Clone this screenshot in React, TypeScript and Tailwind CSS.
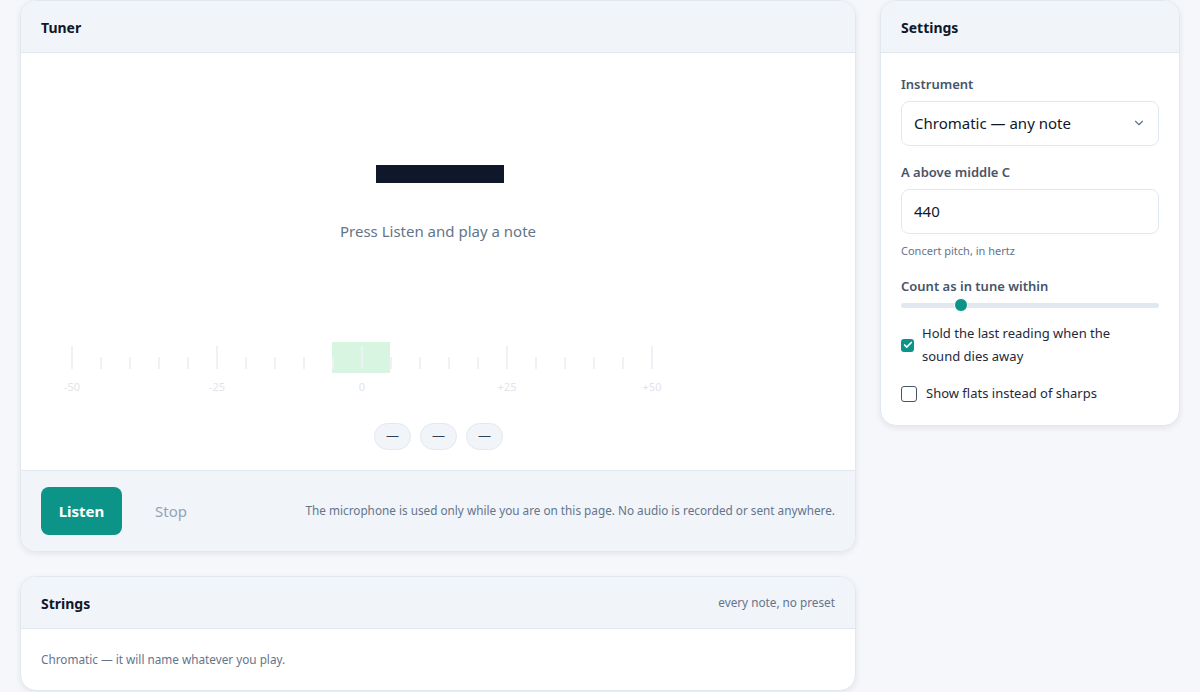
import { Check, ChevronDown } from 'lucide-react'

const ticks = Array.from({ length: 21 }, (_, i) => i)

function Card({ title, aside, children }: { title: string, aside?: string, children: React.ReactNode }) {
	return (
		<div className="rounded-2xl border border-[#e2e8f0] bg-white shadow-[0_2px_6px_rgba(15,23,42,0.08)] overflow-hidden">
			<div className="flex items-center justify-between h-[52px] px-5 bg-[#f1f4f9] border-b border-[#e2e8f0]">
				<h2 className="text-[14px] font-bold text-[#0f172a] pt-[1px]">{title}</h2>
				{aside && <span className="text-[11.75px] text-[#64748b]">{aside}</span>}
			</div>
			{children}
		</div>
	)
}

function Scale() {
	return (
		<div className="w-full">
			<div className="relative h-[32px]">
				<div className="absolute left-[311px] top-0 w-[58px] h-[31px] bg-[#d7f5e1]" />
				{ticks.map(i => (
					<div
						key={i}
						className={i % 5 === 0
							? 'absolute top-[4px] w-[2px] h-[23px] bg-[#eef1f5]'
							: 'absolute top-[15px] w-[2px] h-[12px] bg-[#eef1f5]'}
						style={{ left: 50 + i * 29 }}
					/>
				))}
			</div>
			<div className="relative h-[20px] text-[11px] text-[#dfe4ea]">
				{['-50', '-25', '0', '+25', '+50'].map((l, i) => (
					<span key={l} className="absolute top-[5px] -translate-x-1/2" style={{ left: 51 + i * 145 }}>{l}</span>
				))}
			</div>
		</div>
	)
}

export default function App() {
	return (
		<div className="min-h-[692px] bg-[#f6f7fb] px-5 pt-0 font-['Noto_Sans','Open_Sans',sans-serif]">
			<div className="flex gap-6 items-start">
				<div className="flex flex-col gap-6 w-[836px]">
					<Card title="Tuner">
						<div className="h-[417px] flex flex-col items-center pt-[112px]">
							<div className="ml-[4px] w-[128px] h-[18px] bg-[#0f172a]" />
							<p className="mt-[37px] text-[15px] text-[#64748b]">Press Listen and play a note</p>
							<div className="mt-[99px] w-full">
								<Scale />
							</div>
							<div className="mt-[29px] flex gap-[9px] pl-[1px]">
								{[0, 1, 2].map(i => (
									<span key={i} className="w-[37px] h-[27px] rounded-full bg-[#f1f5f9] border border-[#e2e8f0] flex items-center justify-center text-[13px] text-[#334155]">—</span>
								))}
							</div>
						</div>
						<div className="h-[81px] bg-[#f1f4f9] border-t border-[#e2e8f0] flex items-center px-5">
							<button className="w-[81px] h-[48px] rounded-lg bg-[#0d9488] text-white text-[15px] font-bold">Listen</button>
							<button className="ml-[33px] text-[15px] text-[#94a3b8]">Stop</button>
							<p className="ml-auto text-[11.75px] text-[#64748b]">The microphone is used only while you are on this page. No audio is recorded or sent anywhere.</p>
						</div>
					</Card>
					<Card title="Strings" aside="every note, no preset">
						<div className="h-[61px] px-5 flex items-center">
							<p className="text-[11.75px] text-[#64748b]">Chromatic — it will name whatever you play.</p>
						</div>
					</Card>
				</div>
				<div className="w-[300px]">
					<Card title="Settings">
						<div className="px-5 pt-[22px] pb-[21px] flex flex-col">
							<label className="text-[13px] font-semibold text-[#475569]">Instrument</label>
							<div className="mt-[6px] h-[45px] rounded-lg border border-[#e2e8f0] flex items-center justify-between px-3 text-[15px] text-[#0f172a]">
								<span>Chromatic — any note</span>
								<ChevronDown size={14} className="text-[#64748b]" />
							</div>
							<label className="mt-[17px] text-[13px] font-semibold text-[#475569]">A above middle C</label>
							<div className="mt-[7px] h-[45px] rounded-lg border border-[#e2e8f0] flex items-center px-3 text-[15px] text-[#0f172a]">440</div>
							<p className="mt-[9px] text-[11px] text-[#64748b]">Concert pitch, in hertz</p>
							<label className="mt-[17px] text-[13px] font-semibold text-[#475569]">Count as in tune within</label>
							<div className="relative mt-[2px] h-[14px] flex items-center">
								<div className="w-full h-[5px] rounded-full bg-[#e2e8f0]" />
								<div className="absolute left-[53px] w-[14px] h-[14px] rounded-full bg-[#0d9488] border border-white" />
							</div>
							<div className="mt-[10px] flex items-center gap-2">
								<span className="w-[13px] h-[13px] rounded-[3px] bg-[#0d9488] flex items-center justify-center shrink-0">
									<Check size={10} strokeWidth={4} className="text-white" />
								</span>
								<span className="text-[13px] leading-[23px] text-[#1e293b]">Hold the last reading when the<br />sound dies away</span>
							</div>
							<div className="mt-[16px] flex items-center gap-[9px]">
								<span className="w-[16px] h-[16px] rounded-[3px] border border-[#475569] bg-white shrink-0" />
								<span className="text-[13px] text-[#1e293b]">Show flats instead of sharps</span>
							</div>
						</div>
					</Card>
				</div>
			</div>
		</div>
	)
}
